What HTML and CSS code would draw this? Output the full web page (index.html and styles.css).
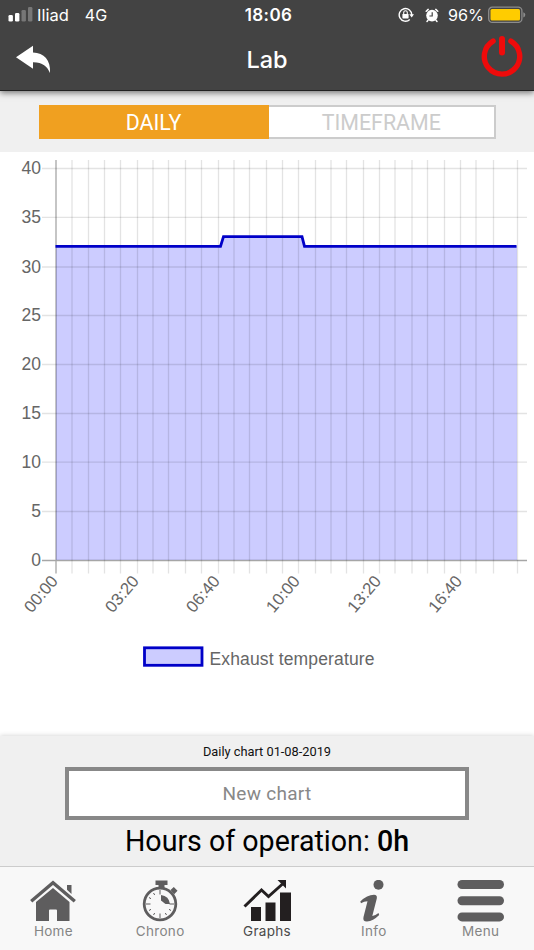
FILE: index.html
```html
<!DOCTYPE html>
<html lang="en">
<head>
    <meta charset="UTF-8">
    <meta name="viewport" content="width=device-width, initial-scale=1.0">
    <title>Lab</title>
    <link rel="stylesheet" href="styles.css">
</head>
<body>
    <header class="header">
        <div class="status">
            <div class="status-left">
                <svg width="25" height="16" viewBox="0 0 25 16">
                    <rect x="0.500" y="8" width="4.4" height="6.5" rx="1.3" fill="#fff"/>
                    <rect x="7" y="6" width="4.4" height="8.5" rx="1.3" fill="#fff"/>
                    <rect x="13.500" y="3" width="4.4" height="11.5" rx="1.3" fill="#777"/>
                    <rect x="20" y="0" width="4.4" height="14.5" rx="1.3" fill="#777"/>
                </svg>
                <span class="carrier">Iliad</span>
                <span class="network">4G</span>
            </div>
            <div class="clock">18:06</div>
            <div class="status-right">
                <svg width="16" height="16" viewBox="0 0 16 16">
                    <path d="M11.8 12.5A6.3 6.3 0 1 1 13.8 8" fill="none" stroke="#fff" stroke-width="1.4"/>
                    <path d="M11.3 7.3H16L13.7 10.6Z" fill="#fff"/>
                    <rect x="4.4" y="7" width="6.2" height="4.4" rx=".6" fill="#fff"/>
                    <path d="M5.7 7.2V5.6a1.8 1.8 0 0 1 3.6 0v1.6" fill="none" stroke="#fff" stroke-width="1.1"/>
                </svg>
                <svg class="alarm" width="14" height="15" viewBox="0 0 14 15">
                    <circle cx="7" cy="7.6" r="5.8" fill="#fff"/>
                    <path d="M1.2 3.2L3.2 1.4M12.8 3.2L10.8 1.4M3 12.2L2 13.4M11 12.2L12 13.4" stroke="#fff" stroke-width="1.500" stroke-linecap="round"/>
                    <path d="M7.2 4.2V8H4.4" fill="none" stroke="#434343" stroke-width="1.2"/>
                </svg>
                <span class="percent">96%</span>
                <svg width="38" height="18" viewBox="0 0 38 18">
                    <rect x=".7" y="1.2" width="33.2" height="15.2" rx="3.6" fill="none" stroke="#8c8c8c" stroke-width="1.3"/>
                    <rect x="2.5" y="3" width="29.5" height="11.6" rx="1.5" fill="#fc0"/>
                    <path d="M35.3 6.2q2 .6 2 2.6t-2 2.6Z" fill="#8c8c8c"/>
                </svg>
            </div>
        </div>
        <nav class="navbar">
            <svg class="back" width="36" height="29" viewBox="0 0 36 29">
                <path d="M0 12.2L17 .7V7.4C28 7.8 35 15 34 28C31.300 21.5 26.500 17.200 17 17.300V23.800Z" fill="#fff"/>
            </svg>
            <h1>Lab</h1>
            <svg class="power" width="42" height="42" viewBox="0 0 42 42">
                <path d="M12.100 6.100A17.700 17.700 0 1 0 29.900 6.100" fill="none" stroke="#ef0b0b" stroke-width="5.400" stroke-linecap="round"/>
                <path d="M21 4V17.500" stroke="#ef0b0b" stroke-width="6" stroke-linecap="round"/>
            </svg>
        </nav>
    </header>

    <div class="switch">
        <button class="switch-btn active">DAILY</button>
        <button class="switch-btn">TIMEFRAME</button>
    </div>

    <main class="chart">
        <svg width="534" height="584" viewBox="0 152 534 584">
            <!-- area -->
            <path d="M56 246H220L223 236.500H302L305 246H517V560H56Z" fill="#ccccff"/>
            <!-- vertical grid -->
            <path class="grid" d="M72 160V573.500M88.500 160V573.500M104.500 160V573.500M120.500 160V573.500M137.500 160V573.500M153 160V573.500M168.500 160V573.500M185.500 160V573.500M201.500 160V573.500M218.500 160V573.500M234 160V573.500M249.500 160V573.500M266.500 160V573.500M282.500 160V573.500M298.500 160V573.500M315.500 160V573.500M331 160V573.500M346.500 160V573.500M363.500 160V573.500M379.500 160V573.500M395 160V573.500M412 160V573.500M427.500 160V573.500M444.500 160V573.500M460.500 160V573.500M476 160V573.500M493.500 160V573.500M517.500 160V573.500"/>
            <!-- horizontal grid -->
            <path class="grid" d="M42 168.500H527M42 217.300H527M42 267H527M42 315.500H527M42 364.500H527M42 413.500H527M42 462.200H527M42 511.500H527"/>
            <path class="axis" d="M56 160V573.500M42 560.500H527"/>
            <path d="M55.500 246.300H220.500L223.500 236.600H302L304.500 246.300H516.500" fill="none" stroke="#0000c8" stroke-width="2.800"/>
            <g class="labels" text-anchor="end">
                <text x="41" y="174">40</text>
                <text x="41" y="222.500">35</text>
                <text x="41" y="272.500">30</text>
                <text x="41" y="321">25</text>
                <text x="41" y="370">20</text>
                <text x="41" y="419">15</text>
                <text x="41" y="467.500">10</text>
                <text x="41" y="517">5</text>
                <text x="41" y="566">0</text>
            </g>
            <g class="labels times" text-anchor="end">
                <text transform="translate(58.800 581.500) rotate(-50)">00:00</text>
                <text transform="translate(139.800 581.500) rotate(-50)">03:20</text>
                <text transform="translate(220.800 581.500) rotate(-50)">06:40</text>
                <text transform="translate(300.800 581.500) rotate(-50)">10:00</text>
                <text transform="translate(382 581.500) rotate(-50)">13:20</text>
                <text transform="translate(463 581.500) rotate(-50)">16:40</text>
            </g>
            <rect x="144.500" y="647.800" width="57.500" height="17.500" fill="#ccccff" stroke="#0000c8" stroke-width="2.800"/>
            <text class="legend" x="209.500" y="665.300" textLength="165">Exhaust temperature</text>
        </svg>
    </main>

    <section class="summary">
        <div class="caption">Daily chart 01-08-2019</div>
        <button class="new-chart">New chart</button>
        <div class="hours">Hours of operation: <b>0h</b></div>
    </section>

    <nav class="tabbar">
        <a class="tab">
            <svg width="48" height="42" viewBox="0 0 48 42">
                <path d="M38 5H42.500V14L38 9.700Z"/>
                <path d="M2.200 21.200L24 2.700L45.800 21.200" fill="none" stroke="#5e5d5e" stroke-width="3.400"/>
                <path d="M24 8L40.500 22V41H28V30.500Q28 29.500 27 29.500H21Q20 29.500 20 30.500V41H7V22Z"/>
            </svg>
            <span>Home</span>
        </a>
        <a class="tab">
            <svg width="48" height="42" viewBox="0 0 48 42">
                <path d="M19.500 .5H31.500V5H28.500V9H22.500V5H19.500ZM34.500 10L37.800 7L41.500 10.800L38.200 14.200Z"/>
                <circle cx="24" cy="24" r="15.800" fill="none" stroke="#5e5d5e" stroke-width="2.800"/>
                <path d="M24 10V14.500M24 33.500V38M10 24H14.500M33.500 24H38M13 17.500L15 18.700M17.500 13L18.700 15M13 30.500L15 29.300M17.500 35L18.700 33M30.500 35L29.300 33M35 30.500L33 29.300" stroke="#5e5d5e" stroke-width="1"/>
                <path d="M25 15Q33 16 34 24H29.500L25 20.500Z"/>
            </svg>
            <span>Chrono</span>
        </a>
        <a class="tab selected">
            <svg width="48" height="42" viewBox="0 0 48 42">
                <path d="M8 27H18V41H8ZM22.500 22.500H32.500V41H22.500ZM37 12.500H48V41H37Z"/>
                <path d="M1.500 26.500L18.500 10L25.500 16.500L39.500 4" fill="none" stroke="#231f20" stroke-width="3"/>
                <path d="M34.500 0H43V8.500Z"/>
            </svg>
            <span>Graphs</span>
        </a>
        <a class="tab">
            <svg width="48" height="42" viewBox="0 0 48 42">
                <circle cx="28.500" cy="4.800" r="5"/>
                <path d="M10.300 21.500Q17 15 24 14.800Q27.500 14.900 26.800 18.500L22.300 36Q25.500 35.500 28.500 33L29.200 35Q23 41.200 17 41.500Q12.500 41.600 13.500 37L17.500 21.300Q14 21.300 11 23.300Z"/>
            </svg>
            <span>Info</span>
        </a>
        <a class="tab">
            <svg width="48" height="42" viewBox="0 0 48 42">
                <rect x="0.500" y="0" width="46.500" height="9" rx="4.500"/>
                <rect x="0.500" y="16.200" width="46.500" height="9" rx="4.500"/>
                <rect x="0.500" y="32.400" width="46.500" height="9" rx="4.500"/>
            </svg>
            <span>Menu</span>
        </a>
    </nav>
</body>
</html>
```

FILE: styles.css
```css
* {
    box-sizing: border-box;
}
body {
    margin: 0;
    width: 534px;
    height: 950px;
    display: flex;
    flex-direction: column;
    overflow: hidden;
    background-color: white;
    font-family: Roboto, sans-serif;
}
svg {
    display: block;
}
.header {
    position: relative;
    height: 91px;
    background-color: #434343;
    border-bottom: 1px solid #222;
    box-shadow: 0 2px 6px rgba(0, 0, 0, 0.5);
    color: white;
    font-family: Inter, sans-serif;
}
.status {
    display: grid;
    grid-template-columns: 1fr auto 1fr;
    align-items: center;
    height: 30px;
    padding: 0 8px;
    font-size: 16.5px;
}
.status-left,
.status-right {
    display: flex;
    align-items: center;
}
.status-right {
    justify-content: flex-end;
}
.carrier {
    margin-left: 4px;
}
.network {
    margin-left: 16px;
    font-size: 16px;
}
.clock {
    padding-left: 3px;
    font-weight: 600;
    font-size: 17px;
    letter-spacing: 0.4px;
}
.alarm {
    margin-left: 11px;
}
.percent {
    margin: 0 4px 0 9px;
    font-size: 16.2px;
}
.navbar {
    display: grid;
    grid-template-columns: 1fr auto 1fr;
    height: 60px;
    padding: 0 11px 0 16px;
}
.back {
    margin-top: 15px;
}
.power {
    justify-self: end;
    margin-top: 5px;
}
h1 {
    margin: 0;
    padding-right: 5px;
    font-size: 23.5px;
    font-weight: 500;
    line-height: 60px;
}
.switch {
    display: flex;
    height: 61px;
    padding: 14px 38px 13px 38.5px;
    background-color: #f0f0f0;
}
.switch-btn {
    flex: 1;
    padding: 0;
    border: 2px solid #ccc;
    border-left: none;
    background-color: white;
    color: #ccc;
    font-family: Roboto, sans-serif;
    font-size: 21.4px;
}
.switch-btn.active {
    flex: 0 0 230px;
    border: none;
    background-color: #f0a020;
    color: white;
}
.chart {
    height: 584px;
}
.grid {
    fill: none;
    stroke: rgba(0, 0, 0, 0.11);
    stroke-width: 1.3;
}
.axis {
    fill: none;
    stroke: rgba(0, 0, 0, 0.35);
    stroke-width: 1.3;
}
.labels,
.legend {
    fill: #666;
    font-family: "Liberation Sans", Arial, sans-serif;
    font-size: 17.5px;
}
.times {
    font-size: 16.8px;
}
.summary {
    display: flex;
    flex-direction: column;
    align-items: center;
    height: 130px;
    background-color: #f0f0f0;
    box-shadow: 0 0 5px rgba(0, 0, 0, 0.2);
}
.caption {
    height: 31px;
    font-size: 12.8px;
    line-height: 31px;
    color: #111;
}
.new-chart {
    width: 404px;
    height: 53px;
    padding: 0;
    border: 4px solid #888;
    background-color: white;
    color: #888;
    font-family: Roboto, sans-serif;
    font-size: 19px;
    letter-spacing: 0.3px;
}
.hours {
    font-size: 28.6px;
    line-height: 42px;
    color: black;
}
.hours b {
    font-weight: 500;
}
.tabbar {
    position: relative;
    display: flex;
    height: 84px;
    padding-top: 13px;
    border-top: 1px solid #ccc;
    background-color: #f8f8f8;
}
.tab {
    flex: 1;
    display: flex;
    flex-direction: column;
    align-items: center;
    color: #858585;
    fill: #5e5d5e;
    font-family: Inter, sans-serif;
    font-size: 13.5px;
    line-height: 19px;
    letter-spacing: 0.3px;
}
.tab.selected {
    color: #4a4a4a;
    fill: #231f20;
}
```
